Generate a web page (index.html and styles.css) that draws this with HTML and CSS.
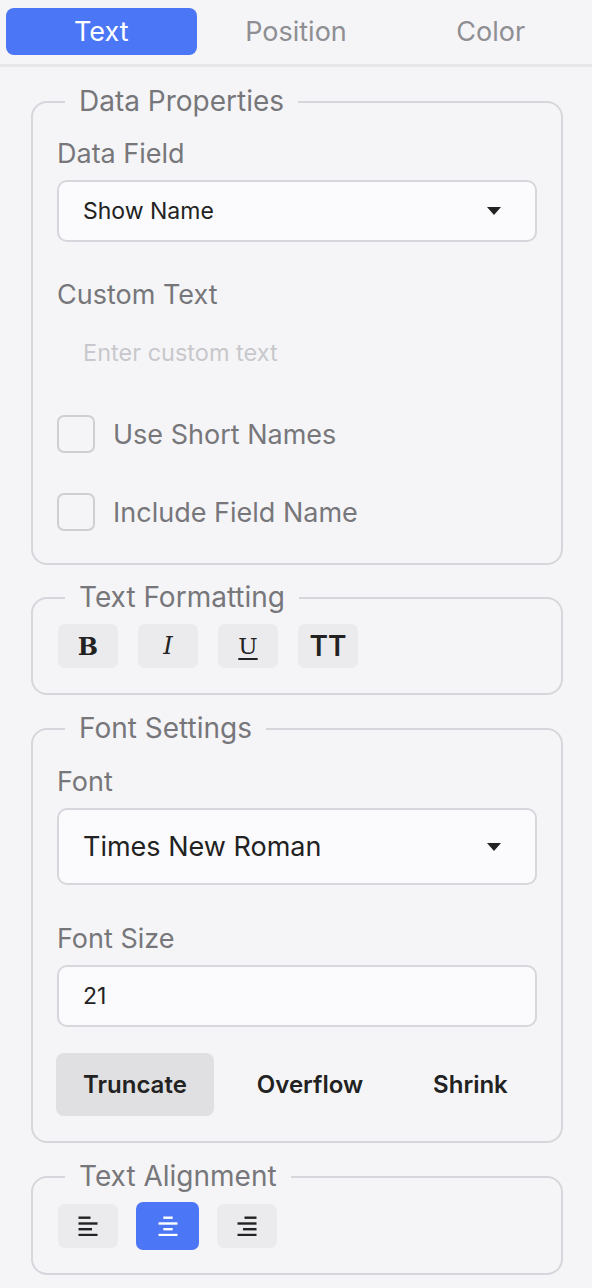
FILE: index.html
```html
<!DOCTYPE html>
<html>
<head>
<meta charset="utf-8">
<link rel="stylesheet" href="styles.css">
</head>
<body>
<div class="tabs">
  <div class="tab active">Text</div>
  <div class="tab">Position</div>
  <div class="tab">Color</div>
</div>
<div class="panel">
  <fieldset class="group first-group">
    <legend>Data Properties</legend>
    <div class="label">Data Field</div>
    <div class="select"><span>Show Name</span><span class="caret"></span></div>
    <div class="label gap-top">Custom Text</div>
    <div class="input plain"><span class="placeholder">Enter custom text</span></div>
    <div class="check first"><span class="box"></span><span>Use Short Names</span></div>
    <div class="check"><span class="box"></span><span>Include Field Name</span></div>
  </fieldset>

  <fieldset class="group">
    <legend>Text Formatting</legend>
    <div class="btnrow">
      <div class="fbtn glyph bold">B</div>
      <div class="fbtn glyph italic">I</div>
      <div class="fbtn glyph under">U</div>
      <div class="fbtn sans">TT</div>
    </div>
  </fieldset>

  <fieldset class="group font-group">
    <legend>Font Settings</legend>
    <div class="label">Font</div>
    <div class="select big"><span>Times New Roman</span><span class="caret"></span></div>
    <div class="label gap-top2">Font Size</div>
    <div class="input"><span>21</span></div>
    <div class="seg">
      <div class="segbtn on">Truncate</div>
      <div class="segbtn">Overflow</div>
      <div class="segbtn">Shrink</div>
    </div>
  </fieldset>

  <fieldset class="group">
    <legend>Text Alignment</legend>
    <div class="btnrow align-row">
      <div class="fbtn">
        <svg width="20" height="20" viewBox="0 0 20 20"><g stroke="#222" stroke-width="2.4"><line x1="0.5" y1="1.7" x2="12.5" y2="1.7"/><line x1="0.5" y1="7.5" x2="19.5" y2="7.5"/><line x1="0.5" y1="13.2" x2="14" y2="13.2"/><line x1="0.5" y1="19" x2="19.5" y2="19"/></g></svg>
      </div>
      <div class="fbtn active">
        <svg width="20" height="20" viewBox="0 0 20 20"><g stroke="#fff" stroke-width="2.4"><line x1="5.3" y1="1.7" x2="14.7" y2="1.7"/><line x1="0.5" y1="7.5" x2="19.5" y2="7.5"/><line x1="5.3" y1="13.2" x2="14.7" y2="13.2"/><line x1="0.5" y1="19" x2="19.5" y2="19"/></g></svg>
      </div>
      <div class="fbtn">
        <svg width="20" height="20" viewBox="0 0 20 20"><g stroke="#222" stroke-width="2.4"><line x1="7.5" y1="1.7" x2="19.5" y2="1.7"/><line x1="0.5" y1="7.5" x2="19.5" y2="7.5"/><line x1="6" y1="13.2" x2="19.5" y2="13.2"/><line x1="0.5" y1="19" x2="19.5" y2="19"/></g></svg>
      </div>
    </div>
  </fieldset>
</div>
</body>
</html>
```

FILE: styles.css
```css
* { box-sizing: border-box; }
html, body { margin: 0; padding: 0; }
body {
  background: #f5f5f7;
  font-family: Inter, "Noto Sans", sans-serif;
  color: #222;
  width: 592px;
}
.tabs {
  display: flex;
  gap: 4px;
  padding: 8px 6px 9px;
  border-bottom: 3px solid #e5e5ea;
}
.tab {
  flex: 1;
  height: 47px;
  display: flex;
  align-items: center;
  justify-content: center;
  font-size: 27px;
  color: #8e8e93;
  border-radius: 8px;
}
.tab.active {
  background: #4b76f6;
  color: #fff;
}
.panel {
  padding: 20px 29px 0 31px;
}
.group {
  margin: 0 0 19px 0;
  border: 2px solid #d6d7dc;
  border-radius: 16px;
  padding: 23px 24px 25px 24px;
  min-width: 0;
}
.first-group { padding-bottom: 32px; margin-bottom: 18px; }
.font-group { padding-top: 24px; }
.group legend {
  margin-left: 8px;
  padding: 0 14px;
  font-size: 28px;
  line-height: 29px;
  color: #77777b;
}
.label {
  font-size: 27px;
  line-height: 29px;
  color: #77777b;
  margin-bottom: 12px;
}
.label.gap-top { margin-top: 38px; }
.label.gap-top2 { margin-top: 39px; }
.select, .input {
  height: 62px;
  border: 2px solid #d6d7dc;
  border-radius: 10px;
  background: #fbfbfd;
  display: flex;
  align-items: center;
  padding: 0 24px 0 24px;
  font-size: 23px;
  color: #222;
}
.select { justify-content: space-between; padding-right: 34px; }
.select.big { height: 77px; font-size: 27px; }
.input.plain {
  border-color: transparent;
  background: transparent;
}
.placeholder { color: #c8c8cc; font-size: 23.5px; }
.caret {
  width: 0; height: 0;
  border-left: 7px solid transparent;
  border-right: 7px solid transparent;
  border-top: 8px solid #222;
}
.check {
  display: flex;
  align-items: center;
  gap: 18px;
  font-size: 27px;
  color: #77777b;
  margin-top: 40px;
  height: 38px;
}
.check.first { margin-top: 32px; }
.box {
  width: 38px; height: 38px;
  border: 2px solid #cfcfd3;
  border-radius: 7px;
  flex: none;
}
.btnrow {
  display: flex;
  align-items: center;
  gap: 20px;
  padding-left: 1px;
  margin-top: -11px;
}
.align-row { margin-top: -10px; }
.fbtn {
  width: 60px;
  height: 44px;
  border-radius: 7px;
  background: #ebebed;
  display: flex;
  align-items: center;
  justify-content: center;
  font-size: 26px;
  color: #222;
}
.fbtn svg { display: block; }
.fbtn.active {
  width: 63px;
  height: 48px;
  background: #4b76f6;
  margin: -2px -2px;
}
.glyph { font-family: "DejaVu Serif", "Liberation Serif", serif; font-size: 24px; }
.bold { font-weight: bold; }
.italic { font-style: italic; font-weight: normal; }
.under { text-decoration: underline; text-decoration-thickness: 2px; text-underline-offset: 4px; font-weight: normal; font-size: 23px; }
.sans { font-family: Inter, sans-serif; font-weight: 600; font-size: 28px; }
.seg {
  display: flex;
  gap: 16px;
  margin-top: 26px;
  margin-left: -1px;
}
.segbtn {
  height: 63px;
  padding: 0 27px;
  border-radius: 8px;
  display: flex;
  align-items: center;
  font-size: 24px;
  font-weight: 600;
  color: #222;
}
.segbtn.on { background: #e0e0e2; }
```
